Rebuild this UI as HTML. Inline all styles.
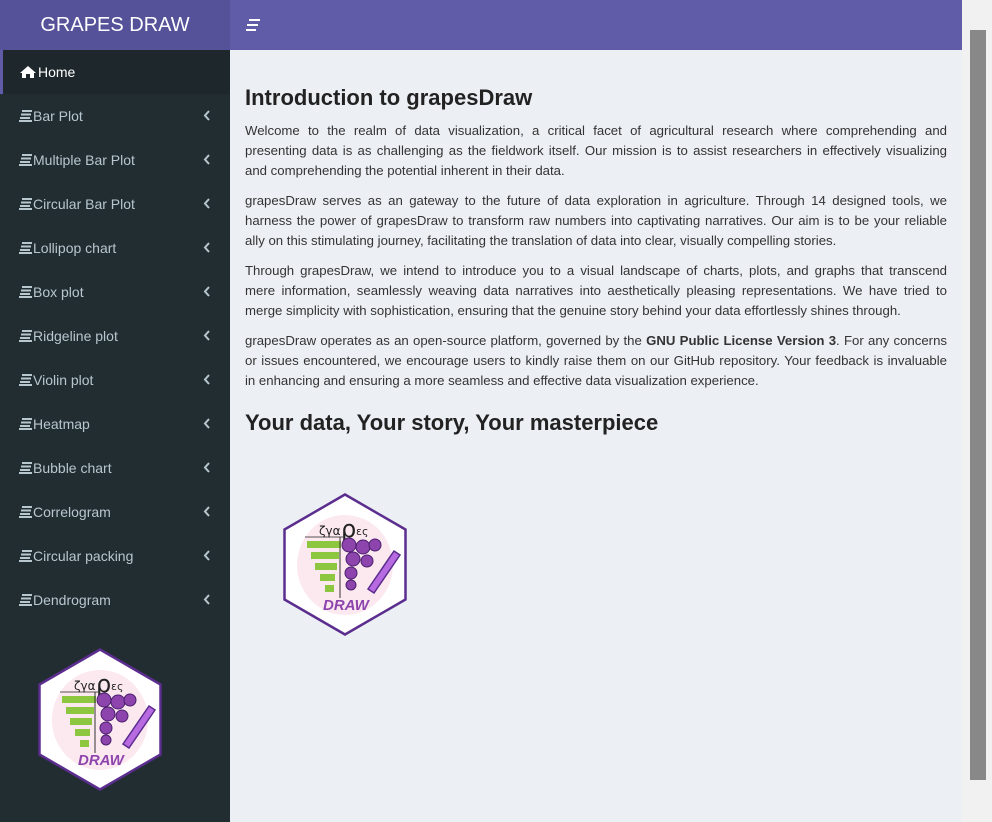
<!DOCTYPE html>
<html><head><meta charset="utf-8"><style>
*{margin:0;padding:0;box-sizing:border-box}
body{width:992px;height:822px;overflow:hidden;background:#ecf0f5;font-family:"Liberation Sans",sans-serif;position:relative}
.logo{position:absolute;left:0;top:0;width:230px;height:50px;background:#555299;color:#fff;font-size:20px;text-align:center;line-height:50px}
.nav{position:absolute;left:230px;top:0;width:732px;height:50px;background:#605ca8}
.side{position:absolute;left:0;top:50px;width:230px;height:772px;background:#222d32}
.item{height:44px;line-height:44px;color:#b8c7ce;font-size:14px;padding-left:33px;position:relative}
.item.act{background:#1e282c;color:#fff;border-left:3px solid #605ca8;padding-left:35px}
.item .ic{position:absolute;left:18px;top:16px}
.item .ch{position:absolute;left:203px;top:16px}
.main{position:absolute;left:245px;top:50px;width:702px;color:#333;font-size:13.2px}
h1{font-size:22px;font-weight:bold;margin-top:36px;height:35px;line-height:24px;color:#222}
h2{font-size:22px;font-weight:bold;line-height:24px;color:#222;margin-top:20px}
.l{height:20px;line-height:20px;text-align:justify;text-align-last:justify;white-space:nowrap;overflow:hidden}
.l.e{text-align-last:left}
.p{margin-bottom:10px}
.sb{position:absolute;left:962px;top:0;width:30px;height:822px;background:#f1f1f1}
.th{position:absolute;left:970px;top:30px;width:16px;height:750px;background:#888}
</style></head><body>
<div class="logo">GRAPES DRAW</div>
<div class="nav"><svg style="position:absolute;left:15px;top:18px" width="16" height="14"><g stroke="#fff" stroke-width="2"><line x1="4" y1="2" x2="15" y2="2"/><line x1="2" y1="7" x2="13" y2="7"/><line x1="1" y1="12" x2="11" y2="12"/></g></svg></div>
<div class="side">
<div class="item act"><svg style="position:absolute;left:16px;top:15px" width="18" height="14"><path d="M9 1 L17 8 L15 8 L15 13 L11 13 L11 9 L7 9 L7 13 L3 13 L3 8 L1 8 Z" fill="#fff"/></svg>Home</div>
<div id="items"></div>
<svg style="position:absolute;left:38px;top:598px" width="124" height="143" viewBox="0 0 124 143"><use href="#hex"/></svg>
</div>
<div class="main">
<h1>Introduction to grapesDraw</h1>
<div class="p"><div class="l">Welcome to the realm of data visualization, a critical facet of agricultural research where comprehending and</div><div class="l">presenting data is as challenging as the fieldwork itself. Our mission is to assist researchers in effectively visualizing</div><div class="l e">and comprehending the potential inherent in their data.</div></div>
<div class="p"><div class="l">grapesDraw serves as an gateway to the future of data exploration in agriculture. Through 14 designed tools, we</div><div class="l">harness the power of grapesDraw to transform raw numbers into captivating narratives. Our aim is to be your reliable</div><div class="l e">ally on this stimulating journey, facilitating the translation of data into clear, visually compelling stories.</div></div>
<div class="p"><div class="l">Through grapesDraw, we intend to introduce you to a visual landscape of charts, plots, and graphs that transcend</div><div class="l">mere information, seamlessly weaving data narratives into aesthetically pleasing representations. We have tried to</div><div class="l e">merge simplicity with sophistication, ensuring that the genuine story behind your data effortlessly shines through.</div></div>
<div class="p"><div class="l">grapesDraw operates as an open-source platform, governed by the <b>GNU Public License Version 3</b>. For any concerns</div><div class="l">or issues encountered, we encourage users to kindly raise them on our GitHub repository. Your feedback is invaluable</div><div class="l e">in enhancing and ensuring a more seamless and effective data visualization experience.</div></div>
<h2>Your data, Your story, Your masterpiece</h2>
</div>
<svg style="position:absolute;left:283px;top:493px" width="124" height="143" viewBox="0 0 124 143">
<defs><g id="hex">
<polygon points="62,1.5 122.5,36.5 122.5,106.5 62,141.5 1.5,106.5 1.5,36.5" fill="#fff" stroke="#5b2d8e" stroke-width="2.5"/>
<ellipse cx="62" cy="72" rx="48" ry="50" fill="#fbe3ec" opacity=".8"/>
<text x="36" y="42" font-size="12" font-family="DejaVu Sans,sans-serif" fill="#222">ζγα</text>
<text x="58" y="44" font-size="24" font-family="DejaVu Sans,sans-serif" fill="#222">ρ</text>
<text x="73" y="42" font-size="11" font-family="DejaVu Sans,sans-serif" fill="#222">ες</text>
<line x1="22" y1="44" x2="60" y2="44" stroke="#222" stroke-width=".8"/>
<g fill="#8dc63f"><rect x="24" y="48" width="34" height="7"/><rect x="28" y="59" width="28" height="7"/><rect x="32" y="70" width="22" height="7"/><rect x="37" y="81" width="15" height="7"/><rect x="42" y="92" width="9" height="7"/></g>
<line x1="57" y1="44" x2="57" y2="105" stroke="#333" stroke-width="1"/>
<g fill="#8e44ad" stroke="#4a1f6e" stroke-width="1"><circle cx="66" cy="52" r="7"/><circle cx="80" cy="54" r="7"/><circle cx="92" cy="52" r="6"/><circle cx="70" cy="66" r="7"/><circle cx="84" cy="68" r="6"/><circle cx="68" cy="80" r="6"/><circle cx="68" cy="92" r="5"/></g>
<path d="M85 96 L111 58 L117 62 L91 100 Z" fill="#b86ae0" stroke="#5b2d8e" stroke-width="1.5"/>
<text x="40" y="117" font-size="15" font-style="italic" font-weight="bold" font-family="Liberation Sans,sans-serif" fill="#8e44ad">DRAW</text>
</g></defs>
<use href="#hex"/></svg>
<div class="sb"></div><div class="th"></div>
<script>
var n=["Bar Plot","Multiple Bar Plot","Circular Bar Plot","Lollipop chart","Box plot","Ridgeline plot","Violin plot","Heatmap","Bubble chart","Correlogram","Circular packing","Dendrogram"],h="";
n.forEach(function(t){h+='<div class="item"><svg class="ic" width="15" height="12"><g stroke="#b8c7ce" stroke-width="2"><line x1="4" y1="1" x2="14" y2="1"/><line x1="3" y1="4.5" x2="13" y2="4.5"/><line x1="2" y1="8" x2="12" y2="8"/><line x1="1" y1="11" x2="14" y2="11"/></g></svg>'+t+'<svg class="ch" width="8" height="11"><path d="M6 1 L2 5.5 L6 10" fill="none" stroke="#b8c7ce" stroke-width="2"/></svg></div>'});
document.getElementById("items").innerHTML=h;
</script>
</body></html>
